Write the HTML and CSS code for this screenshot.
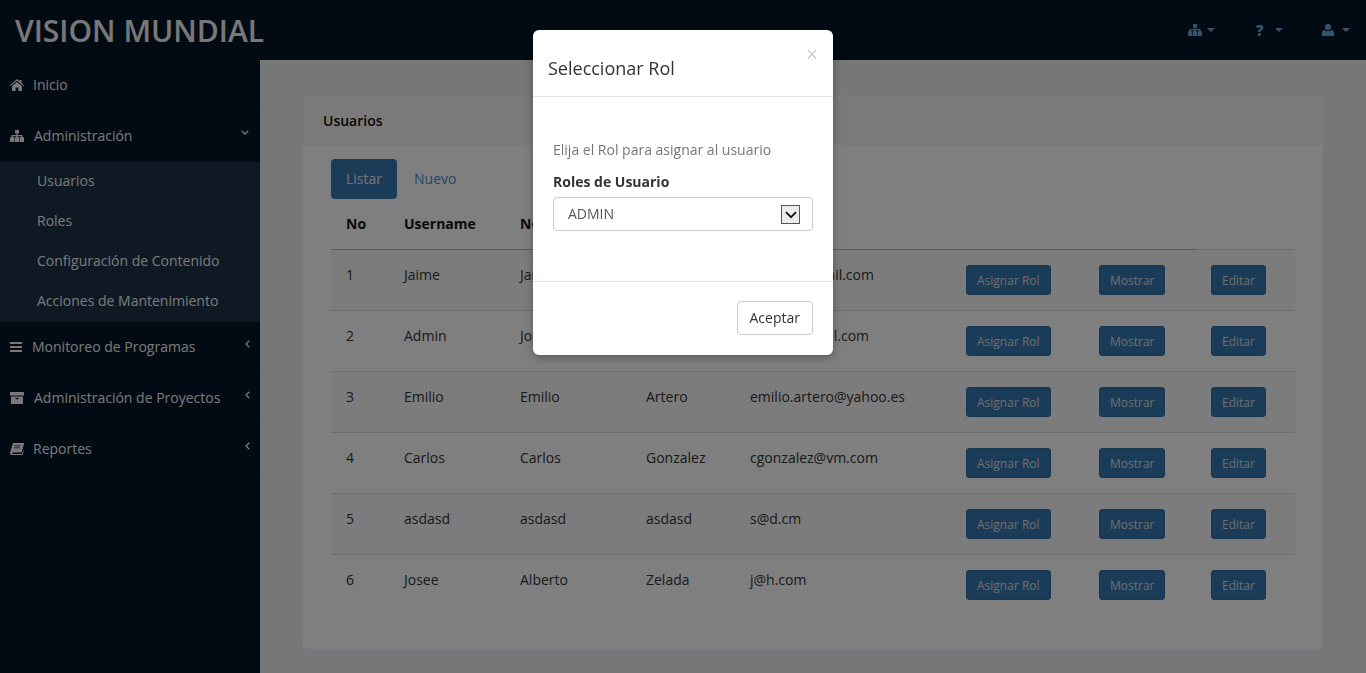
FILE: index.html
```html
<!DOCTYPE html>
<html>
<head>
<meta charset="utf-8">
<title>Vision Mundial</title>
<link rel="stylesheet" href="styles.css">
</head>
<body>
<header class="topbar">
	<div class="brand">VISION MUNDIAL</div>
	<nav class="topnav">
		<a class="topnav-item topnav-org"><svg class="ico-top" viewBox="0 0 14 12"><path d="M5 0h4v3.400H7.600v1.600h4.900v2.200H14V12H9.600V7.200h1.500V6.200H7.700v1H9V12H5V7.200h1.300v-1H2.900v1h1.500V12H0V7.200h1.500V5h4.900V3.400H5z"/></svg><i class="caret"></i></a>
		<a class="topnav-item topnav-help"><span class="help-mark">?</span><i class="caret"></i></a>
		<a class="topnav-item topnav-user"><svg class="ico-top" viewBox="0 0 12 12"><circle cx="6" cy="3" r="3"/><path d="M0 12V8.600C0 7.200 1 6 2.400 6c.9.7 2.200 1.100 3.600 1.100S8.700 6.700 9.600 6C11 6 12 7.200 12 8.600V12z"/></svg><i class="caret"></i></a>
	</nav>
</header>

<div class="layout">
	<aside class="sidebar">
		<a class="side-item">
			<svg class="ico" viewBox="0 0 14 12"><path d="M7 0l2.500 2.200V1h2v3l2.500 2.200-.7.8L7 1.700.7 7 0 6.200zM2 7.200L7 3l5 4.200V12H8.400V8.600H5.600V12H2z"/></svg>
			<span class="side-label side-label-inicio">Inicio</span>
		</a>
		<a class="side-item">
			<svg class="ico" viewBox="0 0 14 12"><path d="M5 0h4v3.400H7.600v1.600h4.900v2.200H14V12H9.600V7.200h1.500V6.200H7.700v1H9V12H5V7.200h1.300v-1H2.900v1h1.500V12H0V7.200h1.500V5h4.900V3.400H5z"/></svg>
			<span class="side-label">Administración</span>
			<svg class="arrow arrow-open" viewBox="0 0 8 5"><path d="M.7.7L4 4l3.300-3.300" /></svg>
		</a>
		<div class="side-sub">
			<a>Usuarios</a>
			<a>Roles</a>
			<a>Configuración de Contenido</a>
			<a>Acciones de Mantenimiento</a>
		</div>
		<a class="side-item">
			<svg class="ico ico-bars" viewBox="0 0 12 10"><path d="M0 0h12v2H0zM0 4h12v2H0zM0 8h12v2H0z"/></svg>
			<span class="side-label">Monitoreo de Programas</span>
			<svg class="arrow arrow-left" viewBox="0 0 5 8"><path d="M4.300.7L1 4l3.300 3.300"/></svg>
		</a>
		<a class="side-item">
			<svg class="ico" viewBox="0 0 14 12"><path d="M0 0h14v3.500H0zM1 4.500h12V12H1zM5.500 6v1.300h3V6z" fill-rule="evenodd"/></svg>
			<span class="side-label">Administración de Proyectos</span>
			<svg class="arrow arrow-left" viewBox="0 0 5 8"><path d="M4.300.7L1 4l3.300 3.300"/></svg>
		</a>
		<a class="side-item">
			<svg class="ico" viewBox="0 0 14 12"><path fill-rule="evenodd" d="M3 0h11v1l-2.500 8.500H3c-1 0-1.300 1.500 0 1.500h9l1-3.500.8.500-1.300 4.500H2C.5 12-.3 10.500.2 9zM4.500 2.500l-.2.800h6l.2-.8zM3.900 4.500l-.2.800h6l.2-.8z"/></svg>
			<span class="side-label side-label-inicio">Reportes</span>
			<svg class="arrow arrow-left" viewBox="0 0 5 8"><path d="M4.300.7L1 4l3.300 3.300"/></svg>
		</a>
	</aside>

	<main class="content">
		<section class="panel">
			<div class="panel-heading">Usuarios</div>
			<div class="panel-body">
				<div class="pills">
					<a class="pill pill-active">Listar</a>
					<a class="pill">Nuevo</a>
				</div>
				<table class="users">
					<colgroup>
						<col class="c-no"><col class="c-user"><col class="c-name"><col class="c-last"><col class="c-mail"><col class="c-b1"><col class="c-b2"><col class="c-b3">
					</colgroup>
					<thead>
						<tr><th>No</th><th>Username</th><th>Nombres</th><th>Apellidos</th><th>Email</th><th></th><th></th><th class="th-end"></th></tr>
					</thead>
					<tbody>
						<tr><td>1</td><td>Jaime</td><td>Jaime</td><td>Perez</td><td>jaimep@gmail.com</td><td><a class="btn">Asignar Rol</a></td><td><a class="btn">Mostrar</a></td><td><a class="btn">Editar</a></td></tr>
						<tr><td>2</td><td>Admin</td><td>Jose</td><td>Lopez</td><td>josete@gmail.com</td><td><a class="btn">Asignar Rol</a></td><td><a class="btn">Mostrar</a></td><td><a class="btn">Editar</a></td></tr>
						<tr><td>3</td><td>Emilio</td><td>Emilio</td><td>Artero</td><td>emilio.artero@yahoo.es</td><td><a class="btn">Asignar Rol</a></td><td><a class="btn">Mostrar</a></td><td><a class="btn">Editar</a></td></tr>
						<tr><td>4</td><td>Carlos</td><td>Carlos</td><td>Gonzalez</td><td>cgonzalez@vm.com</td><td><a class="btn">Asignar Rol</a></td><td><a class="btn">Mostrar</a></td><td><a class="btn">Editar</a></td></tr>
						<tr><td>5</td><td>asdasd</td><td>asdasd</td><td>asdasd</td><td>s@d.cm</td><td><a class="btn">Asignar Rol</a></td><td><a class="btn">Mostrar</a></td><td><a class="btn">Editar</a></td></tr>
						<tr><td>6</td><td>Josee</td><td>Alberto</td><td>Zelada</td><td>j@h.com</td><td><a class="btn">Asignar Rol</a></td><td><a class="btn">Mostrar</a></td><td><a class="btn">Editar</a></td></tr>
					</tbody>
				</table>
			</div>
		</section>
	</main>
</div>

<div class="backdrop"></div>

<div class="modal">
	<div class="modal-header">
		<span class="modal-close">×</span>
		<h4 class="modal-title">Seleccionar Rol</h4>
	</div>
	<div class="modal-body">
		<p class="modal-text">Elija el Rol para asignar al usuario</p>
		<label class="modal-label">Roles de Usuario</label>
		<div class="select-wrap">
			<select class="select"><option>ADMIN</option></select>
			<span class="select-arrow"><svg viewBox="0 0 12 8"><path d="M1 1.200l5 5 5-5"/></svg></span>
		</div>
	</div>
	<div class="modal-footer">
		<a class="btn-default">Aceptar</a>
	</div>
</div>
</body>
</html>
```

FILE: styles.css
```css
* {
	box-sizing: border-box;
}
html, body {
	margin: 0;
	height: 673px;
	overflow: hidden;
}
body {
	font-family: "Open Sans", sans-serif;
	font-size: 14px;
	color: #333;
	background: #eceef2;
}
a {
	text-decoration: none;
}

/* top bar */
.topbar {
	height: 60px;
	background: #041426;
	display: flex;
	align-items: center;
	justify-content: space-between;
}
.brand {
	padding-left: 15px;
	font-size: 30px;
	font-weight: 600;
	color: #f0f0f0;
}
.topnav {
	display: flex;
	align-items: center;
	height: 100%;
	padding-right: 16px;
}
.topnav-item {
	display: flex;
	align-items: center;
	color: #6ea6dc;
}
.topnav-org {
	margin-right: 43px;
}
.topnav-help {
	margin-right: 39px;
}
.ico-top {
	width: 14px;
	height: 12px;
	fill: #6ea6dc;
}
.topnav-user .ico-top {
	width: 12px;
}
.help-mark {
	width: 7px;
	margin-left: -2px;
	margin-right: 2px;
	font-size: 15px;
	font-weight: 800;
	line-height: 12px;
}
.caret {
	width: 0;
	height: 0;
	margin-left: 5px;
	border-top: 4px solid #6ea6dc;
	border-left: 4.500px solid transparent;
	border-right: 4.500px solid transparent;
}
.topnav-help .caret {
	margin-left: 10px;
}
.topnav-user .caret {
	margin-left: 8px;
}

/* layout */
.layout {
	display: flex;
	height: 613px;
}
.sidebar {
	width: 260px;
	flex: none;
	background: #041426;
	color: #f2f2f2;
}
.side-item {
	display: flex;
	align-items: center;
	height: 51px;
	padding: 0 10px 1px;
	border-bottom: 1px solid #0c1d31;
	color: #f2f2f2;
}
.ico {
	width: 14px;
	height: 12px;
	flex: none;
	fill: #f2f2f2;
}
.ico-bars {
	width: 12px;
	height: 10px;
}
.side-label {
	margin-left: 10px;
	flex: 1;
}
.side-label-inicio {
	margin-left: 9px;
}
.arrow {
	flex: none;
	fill: none;
	stroke: #f2f2f2;
	stroke-width: 1.300;
	margin-bottom: 6px;
}
.arrow-open {
	width: 8px;
	height: 5px;
	margin-right: 1px;
}
.arrow-left {
	width: 5px;
	height: 8px;
}
.side-sub {
	background: #1c3246;
	display: flex;
	flex-direction: column;
}
.side-sub a {
	height: 40px;
	line-height: 38px;
	padding-left: 37px;
	color: #f2f2f2;
}

/* content */
.content {
	flex: 1;
	padding: 35px 43px 24px;
}
.panel {
	background: #fff;
	border-radius: 4px;
}
.panel-heading {
	height: 50px;
	line-height: 52px;
	padding-left: 20px;
	border-radius: 4px 4px 0 0;
	background: #f5f5f5;
	font-weight: 600;
	color: #111;
}
.panel-body {
	padding: 14px 28px 34px;
}
.pills {
	display: flex;
	gap: 2px;
}
.pill {
	height: 40px;
	line-height: 40px;
	padding: 0 15px;
	border-radius: 4px;
	color: #3f8ed0;
}
.pill-active {
	background: #3779b0;
	color: #e8e8e8;
}

/* table */
.users {
	width: 964px;
	border-collapse: collapse;
	table-layout: fixed;
}
.c-no { width: 58px; }
.c-user { width: 116px; }
.c-name { width: 126px; }
.c-last { width: 104px; }
.c-mail { width: 216px; }
.c-b1 { width: 133px; }
.c-b2 { width: 112px; }
.c-b3 { width: 99px; }
.users th {
	height: 50px;
	padding: 0 15px;
	text-align: left;
	font-weight: 700;
	color: #111;
	border-bottom: 1px solid #b8b8b8;
}
.users .th-end {
	border-bottom-color: #ddd;
}
.users td {
	height: 61px;
	padding: 15px 15px 0;
	vertical-align: top;
	line-height: 20px;
	border-bottom: 1px solid #ddd;
	color: #333;
}
.users tbody tr:last-child td {
	border-bottom: 0;
}
.users tbody tr:nth-child(odd) {
	background: #f9f9f9;
}
.btn {
	display: block;
	width: fit-content;
	height: 30px;
	line-height: 30px;
	padding: 0 10px;
	border: 1px solid #2e6da4;
	border-radius: 3px;
	background: #3779b0;
	font-size: 12px;
	color: #ddd;
}

/* modal */
.backdrop {
	position: fixed;
	inset: 0;
	background: rgba(0, 0, 0, 0.5);
}
.modal {
	position: absolute;
	left: 533px;
	top: 30px;
	width: 300px;
	height: 325px;
	background: #fff;
	border-radius: 6px;
	box-shadow: 0 3px 9px rgba(0, 0, 0, 0.3);
}
.modal-header {
	position: relative;
	height: 67px;
	padding: 0 15px;
	border-bottom: 1px solid #e5e5e5;
}
.modal-close {
	position: absolute;
	top: 11px;
	right: 15px;
	font-size: 21px;
	line-height: 26px;
	color: #ccc;
}
.modal-title {
	margin: 0;
	padding-top: 26px;
	font-size: 18px;
	font-weight: 400;
	line-height: 25px;
	color: #333;
}
.modal-body {
	height: 184px;
	padding: 43px 20px 0;
}
.modal-text {
	margin: 0 0 12px;
	line-height: 20px;
	color: #777;
}
.modal-label {
	display: block;
	margin-bottom: 5px;
	font-weight: 700;
	line-height: 20px;
	color: #333;
}
.select-wrap {
	position: relative;
}
.select {
	display: block;
	width: 100%;
	height: 34px;
	padding: 0 14px 2px;
	border: 1px solid #ccc;
	border-radius: 4px;
	background: #fff;
	font-family: "Open Sans", sans-serif;
	font-size: 14px;
	color: #555;
	appearance: none;
}
.select-arrow {
	position: absolute;
	top: 8px;
	right: 13px;
	width: 19px;
	height: 19px;
	display: flex;
	align-items: center;
	justify-content: center;
	border: 1px solid #555;
	background: #ececec;
}
.select-arrow svg {
	width: 12px;
	height: 8px;
	fill: none;
	stroke: #111;
	stroke-width: 1.800;
}
.modal-footer {
	display: flex;
	justify-content: flex-end;
	padding: 19px 20px;
	border-top: 1px solid #e5e5e5;
}
.btn-default {
	height: 34px;
	line-height: 31px;
	padding: 0 12px;
	border: 1px solid #ccc;
	border-radius: 4px;
	color: #333;
}
```
